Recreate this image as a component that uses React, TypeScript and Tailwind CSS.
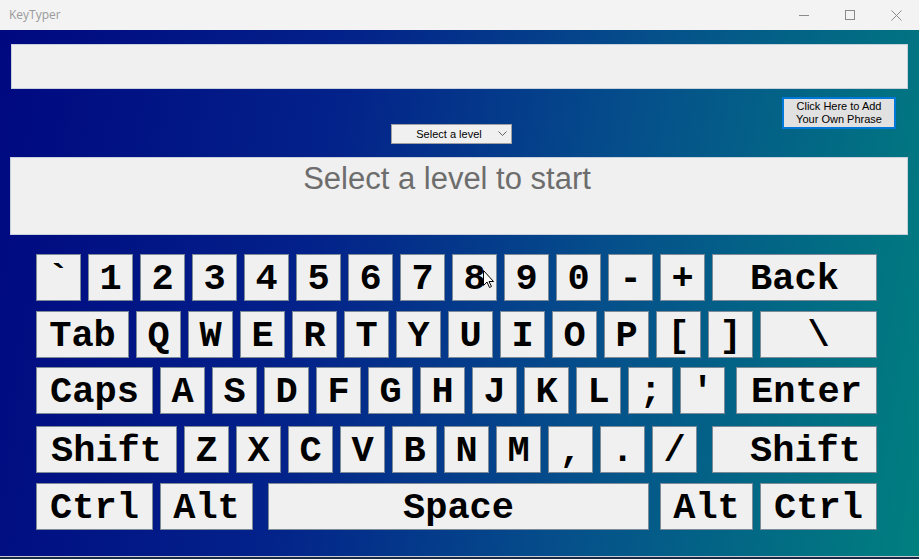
type K = { label: string; w?: number; ml?: number; pl?: number };

const rows: { mt: number; keys: K[] }[] = [
  {
    mt: 19,
    keys: [
      { label: "`" }, { label: "1" }, { label: "2" }, { label: "3" }, { label: "4" },
      { label: "5" }, { label: "6" }, { label: "7" }, { label: "8" }, { label: "9" },
      { label: "0" }, { label: "-" }, { label: "+" }, { label: "Back", w: 165 },
    ],
  },
  {
    mt: 10,
    keys: [
      { label: "Tab", w: 93 }, { label: "Q" }, { label: "W" }, { label: "E" }, { label: "R" },
      { label: "T" }, { label: "Y" }, { label: "U" }, { label: "I" }, { label: "O" },
      { label: "P" }, { label: "[" }, { label: "]" }, { label: "\\", w: 117 },
    ],
  },
  {
    mt: 9,
    keys: [
      { label: "Caps", w: 117 }, { label: "A" }, { label: "S" }, { label: "D" }, { label: "F" },
      { label: "G" }, { label: "H" }, { label: "J" }, { label: "K" }, { label: "L" },
      { label: ";" }, { label: "'" }, { label: "Enter", w: 141, ml: 4 },
    ],
  },
  {
    mt: 12,
    keys: [
      { label: "Shift", w: 141 }, { label: "Z" }, { label: "X" }, { label: "C" }, { label: "V" },
      { label: "B" }, { label: "N" }, { label: "M" }, { label: "," }, { label: "." },
      { label: "/" }, { label: "Shift", w: 165, ml: 8, pl: 22 },
    ],
  },
  {
    mt: 10,
    keys: [
      { label: "Ctrl", w: 117 }, { label: "Alt", w: 93 }, { label: "Space", w: 381, ml: 8 },
      { label: "Alt", w: 93, ml: 4 }, { label: "Ctrl", w: 117 },
    ],
  },
];

function Key({ k }: { k: K }) {
  return (
    <div
      className="h-[47px] shrink-0 flex items-center justify-center pt-[3px] border border-[#7d8a97] bg-[#f0f0f0] text-black font-['Liberation_Mono','Courier_New',monospace] font-bold text-[37px] leading-none"
      style={{ width: k.w ?? 45, marginLeft: k.ml ?? 0, paddingLeft: k.pl ?? 0 }}
    >
      {k.label}
    </div>
  );
}

export default function App() {
  return (
    <div className="w-[919px] h-[559px] flex flex-col overflow-hidden font-['Liberation_Sans',Arial,sans-serif]">
      {/* title bar */}
      <div className="h-[30px] bg-[#f3f3f3] flex items-center">
        <span className="ml-[9px] text-[12px] text-[#9a9a9a] font-['Open_Sans',sans-serif]">KeyTyper</span>
        <div className="ml-auto flex items-center">
          <div className="w-[46px] h-[30px] flex items-center justify-center">
            <div className="w-[10px] h-px bg-[#8a8a8a]" />
          </div>
          <div className="w-[46px] h-[30px] flex items-center justify-center">
            <div className="w-[10px] h-[10px] border border-[#8a8a8a]" />
          </div>
          <div className="w-[46px] h-[30px] flex items-center justify-center">
            <svg width="11" height="11" viewBox="0 0 11 11">
              <path d="M0.5 0.5 L10.5 10.5 M10.5 0.5 L0.5 10.5" stroke="#8a8a8a" strokeWidth="1" />
            </svg>
          </div>
        </div>
      </div>

      {/* client area */}
      <div className="relative h-[526px] bg-[linear-gradient(100deg,#000880_0%,#03228a_35%,#05508b_65%,#00807f_100%)]">
        <div className="mt-[14px] ml-[11px] w-[897px] h-[45px] bg-[#f0f0f0] border border-[#c8d0dc]" />

        <div className="flex items-start h-[68px]">
          <div className="ml-[391px] mt-[35px] w-[121px] h-[20px] bg-[#f0f0f0] border border-[#a0a0a0] flex items-center text-[11px] text-black">
            <span className="flex-1 text-center pl-[8px]">Select a level</span>
            <svg className="mr-[4px]" width="9" height="6" viewBox="0 0 9 6">
              <path d="M0.5 0.5 L4.5 4.5 L8.5 0.5" fill="none" stroke="#606060" strokeWidth="1" />
            </svg>
          </div>
          <div className="ml-[270px] mt-[8px] w-[114px] h-[32px] bg-[#e1e1e1] border-2 border-[#0078d7] flex flex-col items-center justify-center text-[11px] leading-[13px] text-black">
            <span>Click Here to Add</span>
            <span>Your Own Phrase</span>
          </div>
        </div>

        <div className="ml-[10px] w-[898px] h-[78px] bg-[#f0f0f0] border border-[#c8d0dc] flex justify-center pr-[24px]">
          <span className="mt-[3px] text-[31px] leading-[36px] text-[#6d6d6d]">Select a level to start</span>
        </div>

        {rows.map((r, i) => (
          <div key={i} className="flex gap-[7px] ml-[36px]" style={{ marginTop: r.mt }}>
            {r.keys.map((k, j) => (
              <Key key={j} k={k} />
            ))}
          </div>
        ))}

        {/* mouse cursor */}
        <svg className="absolute left-[483px] top-[240px]" width="12" height="19" viewBox="0 0 12 19">
          <path d="M0.5 0.5 L0.5 15.5 L4 12 L6.5 17.5 L8.5 16.5 L6 11.5 L10.5 11.5 Z" fill="#ffffff" stroke="#000000" strokeWidth="1" />
        </svg>
      </div>
      <div className="h-px bg-[#c9ced6]" />
      <div className="flex-1 bg-[#1b2a44]" />
    </div>
  );
}
